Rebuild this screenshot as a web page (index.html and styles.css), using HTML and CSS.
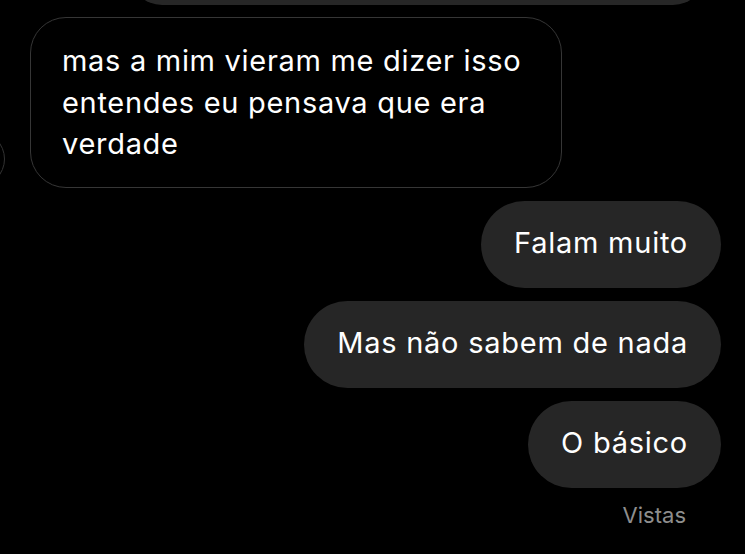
FILE: index.html
```html
<!DOCTYPE html>
<html lang="pt">
<head>
<meta charset="utf-8">
<link rel="stylesheet" href="styles.css">
</head>
<body>
<div class="thread">
  <div class="prev"></div>
  <div class="row-in">
    <div class="avatar"></div>
    <div class="bubble-in">mas a mim vieram me dizer isso entendes eu pensava que era verdade</div>
  </div>
  <div class="bubble-out first">Falam muito</div>
  <div class="bubble-out">Mas não sabem de nada</div>
  <div class="bubble-out">O básico</div>
  <div class="seen">Vistas</div>
</div>
</body>
</html>
```
FILE: styles.css
```css
html, body {
  margin: 0;
  padding: 0;
  background: #000;
}
body {
  width: 745px;
  height: 554px;
  overflow: hidden;
  font-family: "Inter", "Roboto", sans-serif;
  color: #fff;
}
.thread {
  display: flex;
  flex-direction: column;
  padding-right: 24px;
}
.prev {
  align-self: flex-start;
  margin-left: 130px;
  width: 575px;
  height: 40px;
  margin-top: -35px;
  background: #272727;
  border-radius: 0 0 32px 32px;
}
.row-in {
  position: relative;
  margin-top: 12px;
  padding-left: 30px;
}
.avatar {
  position: absolute;
  left: -51px;
  top: 114px;
  width: 54px;
  height: 54px;
  border: 1.5px solid #333;
  border-radius: 50%;
}
.bubble-in {
  box-sizing: border-box;
  width: 532px;
  border: 1.5px solid #363636;
  border-radius: 36px;
  padding: 22px 29px 22px 31px;
  font-size: 29px;
  letter-spacing: 0.7px;
  line-height: 41.5px;
}
.bubble-out {
  align-self: flex-end;
  background: #262626;
  border-radius: 44px;
  padding: 21px 33px 25px;
  font-size: 29px;
  letter-spacing: 0.75px;
  line-height: 41px;
  margin-top: 13px;
}
.seen {
  align-self: flex-end;
  margin-right: 35px;
  margin-top: 14px;
  font-size: 22px;
  line-height: 26px;
  color: #8e8e8e;
}
```
